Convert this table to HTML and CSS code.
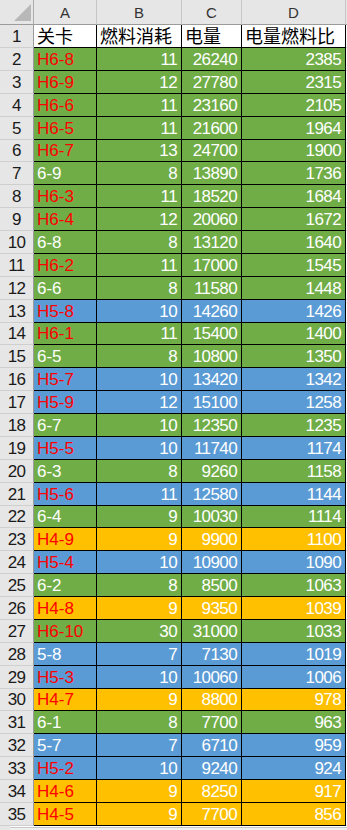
FILE: index.html
```html
<!DOCTYPE html>
<html lang="zh">
<head>
<meta charset="utf-8">
<title>Sheet</title>
<link rel="stylesheet" href="styles.css">
</head>
<body>
<div class="sheet">
  <div class="corner"><svg class="tri" width="17" height="17" viewBox="0 0 17 17"><polygon points="17,0 17,17 0,17" fill="#b8b8b8"/></svg></div>
  <div class="colh">A</div><div class="colh">B</div><div class="colh">C</div><div class="colh">D</div><div class="colh ext"></div>

  <div class="rh">1</div><div class="c hd">关卡</div><div class="c hd">燃料消耗</div><div class="c hd">电量</div><div class="c hd">电量燃料比</div><div class="e"></div>

  <div class="rh">2</div><div class="c g red">H6-8</div><div class="c g n">11</div><div class="c g n">26240</div><div class="c g n">2385</div><div class="e"></div>
  <div class="rh">3</div><div class="c g red">H6-9</div><div class="c g n">12</div><div class="c g n">27780</div><div class="c g n">2315</div><div class="e"></div>
  <div class="rh">4</div><div class="c g red">H6-6</div><div class="c g n">11</div><div class="c g n">23160</div><div class="c g n">2105</div><div class="e"></div>
  <div class="rh">5</div><div class="c g red">H6-5</div><div class="c g n">11</div><div class="c g n">21600</div><div class="c g n">1964</div><div class="e"></div>
  <div class="rh">6</div><div class="c g red">H6-7</div><div class="c g n">13</div><div class="c g n">24700</div><div class="c g n">1900</div><div class="e"></div>
  <div class="rh">7</div><div class="c g wt">6-9</div><div class="c g n">8</div><div class="c g n">13890</div><div class="c g n">1736</div><div class="e"></div>
  <div class="rh">8</div><div class="c g red">H6-3</div><div class="c g n">11</div><div class="c g n">18520</div><div class="c g n">1684</div><div class="e"></div>
  <div class="rh">9</div><div class="c g red">H6-4</div><div class="c g n">12</div><div class="c g n">20060</div><div class="c g n">1672</div><div class="e"></div>
  <div class="rh">10</div><div class="c g wt">6-8</div><div class="c g n">8</div><div class="c g n">13120</div><div class="c g n">1640</div><div class="e"></div>
  <div class="rh">11</div><div class="c g red">H6-2</div><div class="c g n">11</div><div class="c g n">17000</div><div class="c g n">1545</div><div class="e"></div>
  <div class="rh">12</div><div class="c g wt">6-6</div><div class="c g n">8</div><div class="c g n">11580</div><div class="c g n">1448</div><div class="e"></div>
  <div class="rh">13</div><div class="c b red">H5-8</div><div class="c b n">10</div><div class="c b n">14260</div><div class="c b n">1426</div><div class="e"></div>
  <div class="rh">14</div><div class="c g red">H6-1</div><div class="c g n">11</div><div class="c g n">15400</div><div class="c g n">1400</div><div class="e"></div>
  <div class="rh">15</div><div class="c g wt">6-5</div><div class="c g n">8</div><div class="c g n">10800</div><div class="c g n">1350</div><div class="e"></div>
  <div class="rh">16</div><div class="c b red">H5-7</div><div class="c b n">10</div><div class="c b n">13420</div><div class="c b n">1342</div><div class="e"></div>
  <div class="rh">17</div><div class="c b red">H5-9</div><div class="c b n">12</div><div class="c b n">15100</div><div class="c b n">1258</div><div class="e"></div>
  <div class="rh">18</div><div class="c g wt">6-7</div><div class="c g n">10</div><div class="c g n">12350</div><div class="c g n">1235</div><div class="e"></div>
  <div class="rh">19</div><div class="c b red">H5-5</div><div class="c b n">10</div><div class="c b n">11740</div><div class="c b n">1174</div><div class="e"></div>
  <div class="rh">20</div><div class="c g wt">6-3</div><div class="c g n">8</div><div class="c g n">9260</div><div class="c g n">1158</div><div class="e"></div>
  <div class="rh">21</div><div class="c b red">H5-6</div><div class="c b n">11</div><div class="c b n">12580</div><div class="c b n">1144</div><div class="e"></div>
  <div class="rh">22</div><div class="c g wt">6-4</div><div class="c g n">9</div><div class="c g n">10030</div><div class="c g n">1114</div><div class="e"></div>
  <div class="rh">23</div><div class="c o red">H4-9</div><div class="c o n">9</div><div class="c o n">9900</div><div class="c o n">1100</div><div class="e"></div>
  <div class="rh">24</div><div class="c b red">H5-4</div><div class="c b n">10</div><div class="c b n">10900</div><div class="c b n">1090</div><div class="e"></div>
  <div class="rh">25</div><div class="c g wt">6-2</div><div class="c g n">8</div><div class="c g n">8500</div><div class="c g n">1063</div><div class="e"></div>
  <div class="rh">26</div><div class="c o red">H4-8</div><div class="c o n">9</div><div class="c o n">9350</div><div class="c o n">1039</div><div class="e"></div>
  <div class="rh">27</div><div class="c g red">H6-10</div><div class="c g n">30</div><div class="c g n">31000</div><div class="c g n">1033</div><div class="e"></div>
  <div class="rh">28</div><div class="c b wt">5-8</div><div class="c b n">7</div><div class="c b n">7130</div><div class="c b n">1019</div><div class="e"></div>
  <div class="rh">29</div><div class="c b red">H5-3</div><div class="c b n">10</div><div class="c b n">10060</div><div class="c b n">1006</div><div class="e"></div>
  <div class="rh">30</div><div class="c o red">H4-7</div><div class="c o n">9</div><div class="c o n">8800</div><div class="c o n">978</div><div class="e"></div>
  <div class="rh">31</div><div class="c g wt">6-1</div><div class="c g n">8</div><div class="c g n">7700</div><div class="c g n">963</div><div class="e"></div>
  <div class="rh">32</div><div class="c b wt">5-7</div><div class="c b n">7</div><div class="c b n">6710</div><div class="c b n">959</div><div class="e"></div>
  <div class="rh">33</div><div class="c b red">H5-2</div><div class="c b n">10</div><div class="c b n">9240</div><div class="c b n">924</div><div class="e"></div>
  <div class="rh">34</div><div class="c o red">H4-6</div><div class="c o n">9</div><div class="c o n">8250</div><div class="c o n">917</div><div class="e"></div>
  <div class="rh">35</div><div class="c o red">H4-5</div><div class="c o n">9</div><div class="c o n">7700</div><div class="c o n">856</div><div class="e"></div>
</div>
<div class="footer"><div class="footer-rh"></div><div class="scroll"></div></div>
</body>
</html>
```
FILE: styles.css
```css
html, body {
  margin: 0;
  padding: 0;
  background: #ffffff;
  overflow: hidden;
}

body {
  width: 347px;
  height: 830px;
  font-family: "Liberation Sans", "Noto Sans CJK SC", sans-serif;
}

.sheet {
  display: grid;
  grid-template-columns: 34px 63px 85px 60px 104px 1fr;
  grid-template-rows: 25px 23px;
  grid-auto-rows: 22.88px;
}

.sheet > div {
  box-sizing: border-box;
}

.corner {
  background: #e6e6e6;
  border-right: 1px solid #ababab;
  border-bottom: 1px solid #9b9b9b;
  display: flex;
  align-items: flex-end;
  justify-content: flex-end;
  padding: 0 2px 3px 0;
}

.tri {
  display: block;
}

.colh {
  background: #e6e6e6;
  border-right: 1px solid #c6c6c6;
  border-bottom: 1px solid #9b9b9b;
  color: #333333;
  font-size: 15px;
  display: flex;
  align-items: center;
  justify-content: center;
  padding-top: 1px;
}

.colh.ext {
  border-right: none;
}

.rh {
  background: #e6e6e6;
  border-right: 1px solid #9b9b9b;
  border-bottom: 1px solid #cfcfcf;
  color: #1a1a1a;
  font-size: 17px;
  line-height: 20px;
  display: flex;
  align-items: flex-end;
  justify-content: center;
  letter-spacing: -0.6px;
}

.c {
  border-right: 1px solid #000000;
  border-bottom: 1px solid #000000;
  font-size: 17px;
  line-height: 20px;
  display: flex;
  align-items: flex-end;
  padding: 0 3px;
  white-space: nowrap;
  overflow: hidden;
}

.e {
  border-bottom: 1px solid #d9d9d9;
}

.hd {
  background: #ffffff;
  color: #000000;
  font-size: 18px;
  padding-left: 3px;
}

.g { background: #70ad47; }
.b { background: #5b9bd5; }
.o { background: #ffc000; }

.red { color: #ff0000; }
.wt { color: #ffffff; }

.n {
  color: #ffffff;
  justify-content: flex-end;
  padding-right: 4px;
  letter-spacing: -0.6px;
}

.footer {
  display: flex;
  height: 4px;
}

.footer-rh {
  width: 10px;
  background: #e6e6e6;
}

.scroll {
  flex: 1;
  margin-top: 1px;
  background: #f0f0f0;
  border-top: 1px solid #c8c8c8;
}
```
